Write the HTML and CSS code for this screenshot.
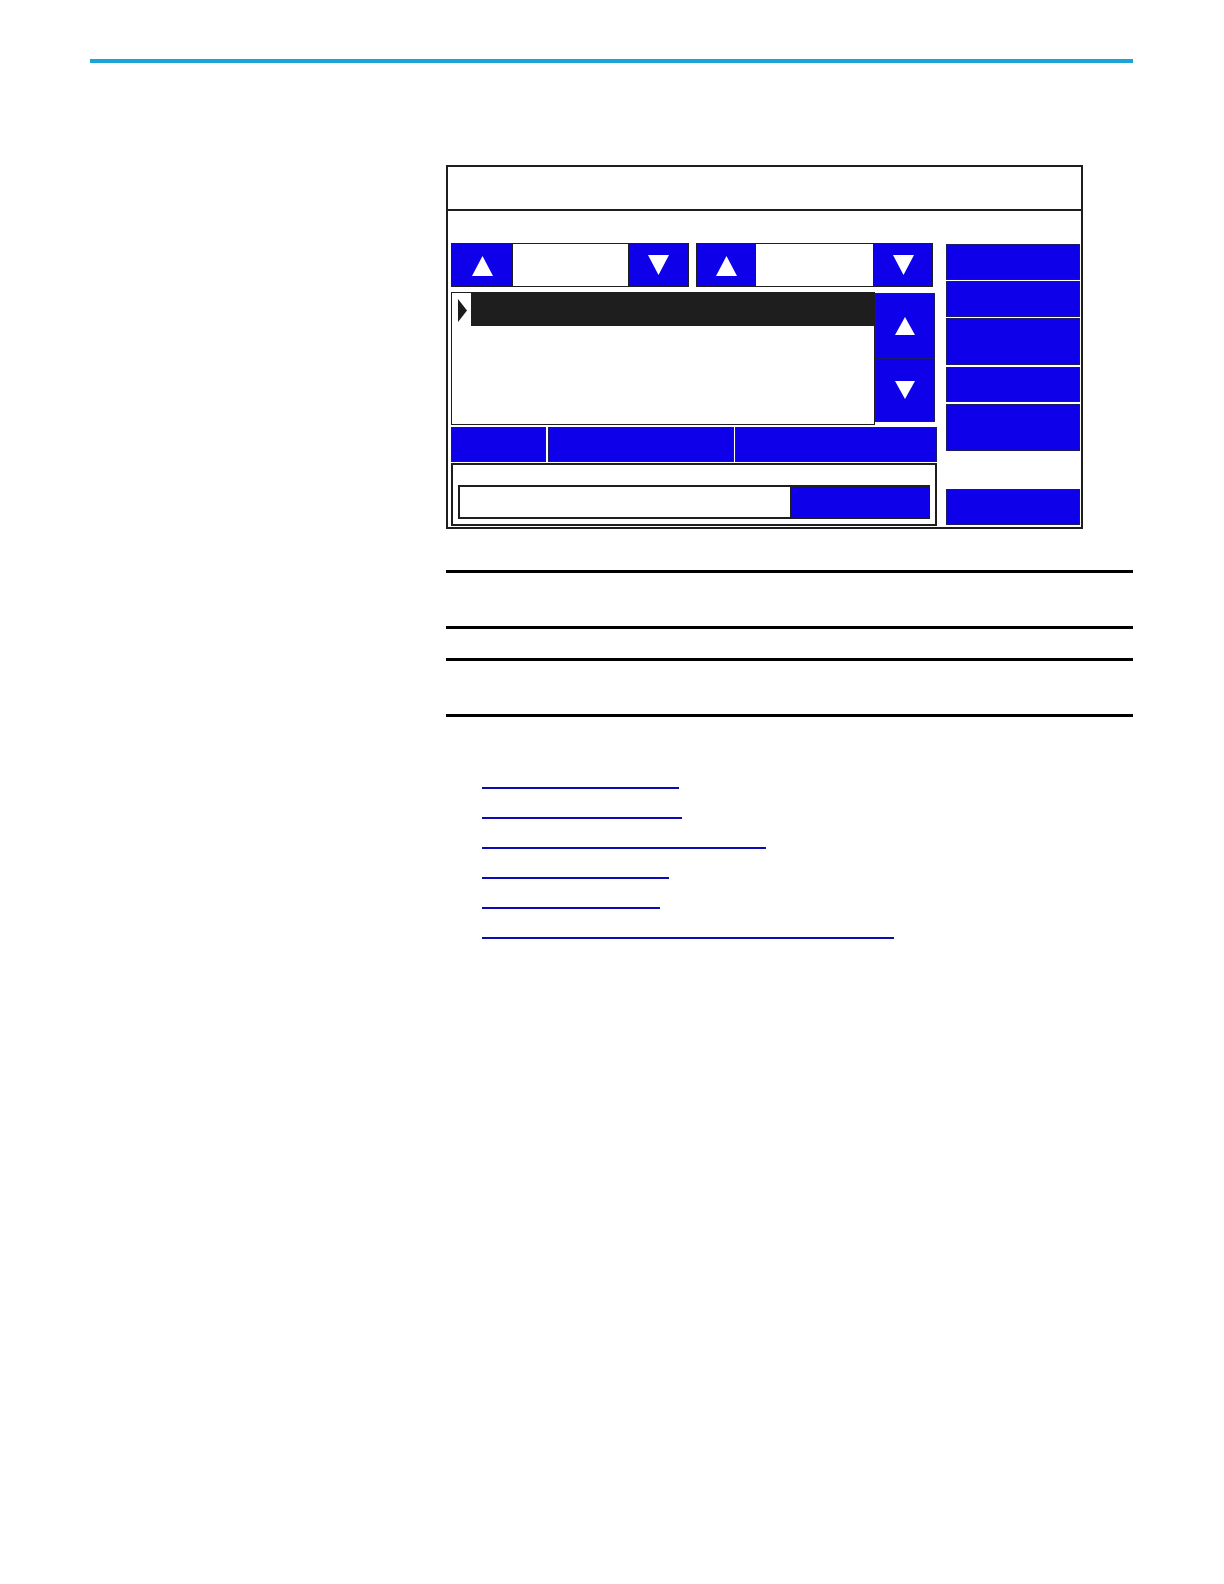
FILE: index.html
```html
<!DOCTYPE html>
<html lang="en">
<head>
<meta charset="utf-8">
<title>Terminal screen</title>
<link rel="stylesheet" href="styles.css">
</head>
<body>
<div class="top-rule"></div>
<div class="content">
  <div class="hmi">
    <div class="hmi-title"></div>
    <div class="hmi-body">
      <div class="hmi-main">
        <div class="spinners">
          <div class="spinner s1">
            <div class="btn spin-btn b-up1"><svg class="tri" viewBox="0 0 21 20"><polygon points="10.5,0 21,20 0,20"/></svg></div>
            <div class="spin-field f1"></div>
            <div class="btn spin-btn b-dn1"><svg class="tri" viewBox="0 0 21 20"><polygon points="0,0 21,0 10.5,20"/></svg></div>
          </div>
          <div class="spinner s2">
            <div class="btn spin-btn b-up2"><svg class="tri" viewBox="0 0 21 20"><polygon points="10.5,0 21,20 0,20"/></svg></div>
            <div class="spin-field f2"></div>
            <div class="btn spin-btn b-dn2"><svg class="tri" viewBox="0 0 21 20"><polygon points="0,0 21,0 10.5,20"/></svg></div>
          </div>
        </div>
        <div class="list-row">
          <div class="list">
            <div class="list-item selected">
              <span class="marker"><svg viewBox="0 0 9 23"><polygon points="0,0 9,11.5 0,23"/></svg></span>
              <span class="bar"></span>
            </div>
          </div>
          <div class="scroll">
            <div class="btn scroll-btn sc-up"><svg class="tri-s" viewBox="0 0 20 18"><polygon points="10,0 20,18 0,18"/></svg></div>
            <div class="btn scroll-btn sc-dn"><svg class="tri-s" viewBox="0 0 20 18"><polygon points="0,0 20,0 10,18"/></svg></div>
          </div>
        </div>
        <div class="tabs">
          <div class="btn tab t1"></div>
          <div class="btn tab t2"></div>
          <div class="btn tab t3"></div>
        </div>
        <div class="entry-box">
          <div class="entry">
            <div class="entry-field"></div>
            <div class="btn entry-btn"></div>
          </div>
        </div>
      </div>
      <div class="hmi-side">
        <div class="btn side-btn h36"></div>
        <div class="btn side-btn h36 g1"></div>
        <div class="btn side-btn h47 g1"></div>
        <div class="btn side-btn h35 g2"></div>
        <div class="btn side-btn h47 g2"></div>
        <div class="btn side-btn h36 bottom"></div>
      </div>
    </div>
  </div>
  <div class="note"></div>
  <div class="note second"></div>
  <ul class="links">
    <li class="link w1"></li>
    <li class="link w2"></li>
    <li class="link w3"></li>
    <li class="link w4"></li>
    <li class="link w5"></li>
    <li class="link w6"></li>
  </ul>
</div>
</body>
</html>
```
FILE: styles.css
```css
html, body {
  margin: 0;
  padding: 0;
  background: #ffffff;
  font-family: "Liberation Sans", Arial, sans-serif;
}

* { box-sizing: border-box; }

.top-rule {
  margin: 59px 0 0 90px;
  width: 1043px;
  height: 4px;
  background: #1ba4d6;
}

.content {
  margin-left: 446px;
  width: 687px;
}

/* HMI panel */
.hmi {
  margin-top: 102px;
  width: 637px;
  height: 364px;
  border: 2px solid #1e1e1e;
  display: flex;
  flex-direction: column;
}

.hmi-title {
  height: 44px;
  border-bottom: 2px solid #1e1e1e;
  flex: none;
}

.hmi-body {
  flex: 1;
  display: flex;
  gap: 9px;
  padding: 32px 1px 1px 3px;
}

.hmi-main {
  width: 486px;
  display: flex;
  flex-direction: column;
}

.btn {
  background: #0e00e8;
  border: 1px solid #1c1c62;
}

/* spinners */
.spinners {
  display: flex;
  gap: 7px;
  height: 44px;
}

.spinner {
  display: flex;
  height: 44px;
}

.spin-btn {
  display: flex;
  align-items: center;
  justify-content: center;
  border-color: #1e1e1e;
}

.b-up1 { width: 62px; }
.b-dn1 { width: 61px; }
.b-up2 { width: 60px; }
.b-dn2 { width: 60px; }

.spin-field {
  background: #ffffff;
  border-top: 1px solid #1e1e1e;
  border-bottom: 1px solid #1e1e1e;
}
.f1 { width: 115px; }
.f2 { width: 117px; }

.tri {
  width: 21px;
  height: 20px;
  fill: #ffffff;
  display: block;
}

.b-up1 .tri, .b-up2 .tri { margin-top: 2px; }

/* list */
.list-row {
  margin-top: 5px;
  height: 133px;
  display: flex;
}

.list {
  width: 424px;
  height: 133px;
  border: 1px solid #1e1e1e;
  background: #ffffff;
}

.list-item {
  display: flex;
  height: 33px;
}

.marker {
  width: 19px;
  flex: none;
  padding: 6px 0 0 6px;
}

.marker svg {
  display: block;
  width: 9px;
  height: 23px;
  fill: #1c1c1c;
}

.bar {
  flex: 1;
  background: #1e1e1e;
}

.scroll {
  width: 60px;
  margin-top: 1px;
  height: 129px;
  display: flex;
  flex-direction: column;
}

.scroll-btn {
  display: flex;
  align-items: center;
  justify-content: center;
}

.sc-up { height: 66px; }
.sc-dn { height: 63px; border-top: none; }

.tri-s {
  width: 20px;
  height: 18px;
  fill: #ffffff;
  display: block;
}

/* tabs */
.tabs {
  margin-top: 2px;
  height: 35px;
  display: flex;
}

.t1 { width: 95px; }
.t2 { width: 186px; margin-left: 2px; }
.t3 { width: 202px; margin-left: 1px; }

/* entry box */
.entry-box {
  margin-top: 1px;
  height: 63px;
  border: 2px solid #1e1e1e;
  padding: 20px 0 0 5px;
}

.entry {
  display: flex;
  height: 34px;
}

.entry-field {
  width: 334px;
  background: #ffffff;
  border: 2px solid #1e1e1e;
}

.entry-btn {
  width: 138px;
  border-color: #1e1e1e;
  border-width: 2px 1px 2px 0;
}

/* side buttons */
.hmi-side {
  width: 134px;
  display: flex;
  flex-direction: column;
  padding: 1px 0 1px 0;
}

.side-btn { width: 134px; flex: none; }
.h36 { height: 36px; }
.h47 { height: 47px; }
.h35 { height: 35px; }
.g1 { margin-top: 1px; }
.g2 { margin-top: 2px; }
.bottom { margin-top: auto; }

/* notes */
.note {
  margin-top: 41px;
  height: 59px;
  border-top: 3px solid #000000;
  border-bottom: 3px solid #000000;
}

.note.second { margin-top: 29px; }

/* links */
.links {
  list-style: none;
  margin: 42px 0 0 36px;
  padding: 0;
}

.link {
  height: 30px;
  border-bottom: 2px solid #0b0bb5;
}

.w1 { width: 197px; }
.w2 { width: 200px; }
.w3 { width: 284px; }
.w4 { width: 187px; }
.w5 { width: 178px; }
.w6 { width: 412px; }
```
